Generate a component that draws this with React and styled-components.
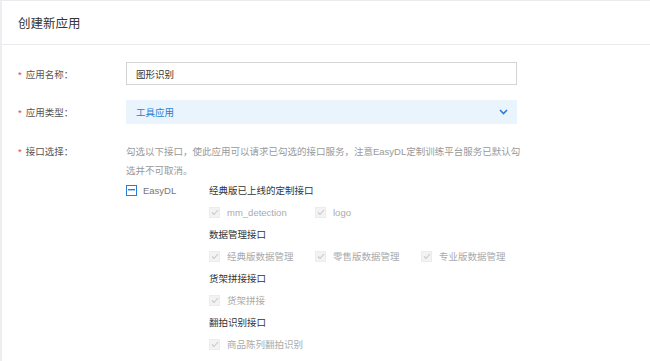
import React from "react";
import styled, { createGlobalStyle } from "styled-components";

const GlobalStyle = createGlobalStyle`
  body {
    margin: 0;
    background: #fff;
    font-family: "Liberation Sans", "Noto Sans CJK SC", sans-serif;
  }
`;

const Card = styled.div`
  width: 650px;
  height: 361px;
  box-sizing: border-box;
  border-top: 1px solid #e9ebee;
  border-left: 2px solid #eceef1;
  overflow: hidden;
`;

const Header = styled.div`
  height: 43px;
  display: flex;
  align-items: center;
  padding-left: 16px;
  font-size: 12.5px;
  color: #333;
  border-bottom: 1px solid #e9ebee;
`;

const Form = styled.div`
  padding: 17px 0 0 16px;
  display: flex;
  flex-direction: column;
`;

const Row = styled.div`
  display: flex;
  align-items: ${(p) => (p.top ? "flex-start" : "center")};
  margin-bottom: ${(p) => p.gap || 0}px;
`;

const Label = styled.div`
  width: 108px;
  flex: none;
  font-size: 9.5px;
  color: #555;
  line-height: ${(p) => (p.top ? "19px" : "normal")};
  &::before {
    content: "*";
    color: #e64552;
    margin-right: 4px;
  }
`;

const Input = styled.div`
  width: 391px;
  height: 23px;
  box-sizing: border-box;
  border: 1px solid #d4d4d4;
  padding-left: 9px;
  display: flex;
  align-items: center;
  font-size: 9.5px;
  color: #333;
`;

const Select = styled.div`
  width: 391px;
  height: 24px;
  box-sizing: border-box;
  background: #e9f4fd;
  padding: 0 9px 0 10px;
  display: flex;
  align-items: center;
  justify-content: space-between;
  font-size: 9.5px;
  color: #2a7ed3;
`;

const Content = styled.div`
  display: flex;
  flex-direction: column;
`;

const Desc = styled.div`
  width: 402px;
  font-size: 9.5px;
  line-height: 19px;
  color: #999;
`;

const Group = styled.div`
  display: flex;
  margin-top: -1px;
`;

const Root = styled.div`
  width: 83px;
  height: 22px;
  display: flex;
  align-items: center;
  gap: 6px;
  font-size: 9.5px;
  color: #777;
`;

const Box = styled.span`
  width: 11px;
  height: 11px;
  box-sizing: border-box;
  flex: none;
  display: flex;
  align-items: center;
  justify-content: center;
  border: 1px solid ${(p) => (p.active ? "#2a7ed3" : "#ececec")};
  background: ${(p) => (p.active ? "#fff" : "#f3f3f3")};
`;

const Apis = styled.div`
  display: flex;
  flex-direction: column;
`;

const Title = styled.div`
  height: 22px;
  display: flex;
  align-items: center;
  font-size: 9.5px;
  color: #333;
`;

const Items = styled.div`
  height: 22px;
  display: flex;
  align-items: center;
`;

const Item = styled.div`
  width: 106px;
  display: flex;
  align-items: center;
  gap: 7px;
  font-size: 9.5px;
  color: #aaa;
`;

const Check = () => (
  <Box>
    <svg width="8" height="7" viewBox="0 0 8 7">
      <polyline points="1,3.5 3,5.5 7,1" fill="none" stroke="#c8c8c8" strokeWidth="1.1" />
    </svg>
  </Box>
);

const groups = [
  { title: "经典版已上线的定制接口", items: ["mm_detection", "logo"] },
  { title: "数据管理接口", items: ["经典版数据管理", "零售版数据管理", "专业版数据管理"] },
  { title: "货架拼接接口", items: ["货架拼接"] },
  { title: "翻拍识别接口", items: ["商品陈列翻拍识别"] },
];

export default function App() {
  return (
    <>
      <GlobalStyle />
      <Card>
        <Header>创建新应用</Header>
        <Form>
          <Row gap={15}>
            <Label>应用名称：</Label>
            <Input>图形识别</Input>
          </Row>
          <Row gap={18}>
            <Label>应用类型：</Label>
            <Select>
              工具应用
              <svg width="9" height="6" viewBox="0 0 9 6">
                <polyline points="1,1 4.5,4.5 8,1" fill="none" stroke="#2a7ed3" strokeWidth="1.6" />
              </svg>
            </Select>
          </Row>
          <Row top>
            <Label top>接口选择：</Label>
            <Content>
              <Desc>
                勾选以下接口，使此应用可以请求已勾选的接口服务，注意EasyDL定制训练平台服务已默认勾选并不可取消。
              </Desc>
              <Group>
                <Root>
                  <Box active>
                    <svg width="7" height="2" viewBox="0 0 7 2">
                      <rect width="7" height="1.4" fill="#2a7ed3" />
                    </svg>
                  </Box>
                  EasyDL
                </Root>
                <Apis>
                  {groups.map((g) => (
                    <React.Fragment key={g.title}>
                      <Title>{g.title}</Title>
                      <Items>
                        {g.items.map((it) => (
                          <Item key={it}>
                            <Check />
                            {it}
                          </Item>
                        ))}
                      </Items>
                    </React.Fragment>
                  ))}
                </Apis>
              </Group>
            </Content>
          </Row>
        </Form>
      </Card>
    </>
  );
}
